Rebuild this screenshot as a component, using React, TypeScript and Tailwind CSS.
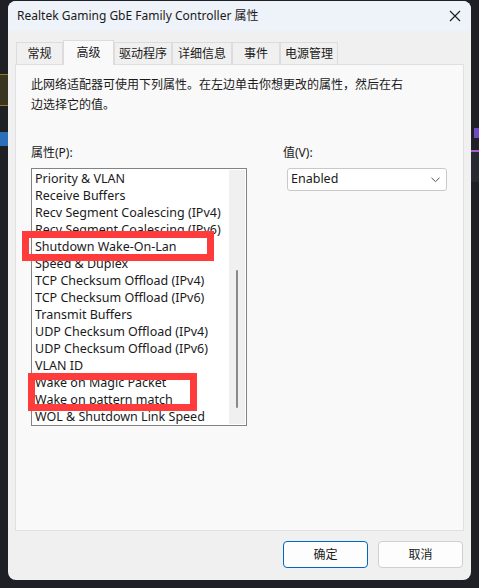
import React from "react";

const items = [
  "Priority & VLAN",
  "Receive Buffers",
  "Recv Segment Coalescing (IPv4)",
  "Recv Segment Coalescing (IPv6)",
  "Shutdown Wake-On-Lan",
  "Speed & Duplex",
  "TCP Checksum Offload (IPv4)",
  "TCP Checksum Offload (IPv6)",
  "Transmit Buffers",
  "UDP Checksum Offload (IPv4)",
  "UDP Checksum Offload (IPv6)",
  "VLAN ID",
  "Wake on Magic Packet",
  "Wake on pattern match",
  "WOL & Shutdown Link Speed",
];

const tabs = ["常规", "高级", "驱动程序", "详细信息", "事件", "电源管理"];
const tabWidths = ["w-[47px]", "w-[51px]", "w-[58px]", "w-[60px]", "w-[48px]", "w-[58px]"];

const font = { fontFamily: '"Noto Sans", "Noto Sans CJK SC", sans-serif' };

export default function App() {
  return (
    <div className="relative w-[479px] h-[588px] overflow-hidden bg-[#1e2025]" style={font}>
      {/* desktop behind the dialog */}
      <div className="absolute left-0 top-[74px] w-[8px] h-[32px] border-y border-[#8a7a2a] bg-[#3a3520]" />
      <div className="absolute left-0 top-[132px] w-[8px] h-[14px] bg-[#2a6fb8]" />
      <div className="absolute right-0 top-[152px] w-[8px] h-[30px] bg-[#272a31]" />
      <div className="absolute right-0 top-[150px] w-[8px] h-[2px] bg-[#b05bd6]" />
      <div className="absolute right-0 top-[128px] w-[5px] h-[10px] bg-[#6e4cc4]" />

      {/* dialog */}
      <div className="relative ml-[8px] mt-[1px] w-[463px] h-[579px] rounded-[8px] overflow-hidden bg-[#f0f0f0] flex flex-col">
        <div className="h-[30px] bg-[#eef2f9] flex items-center justify-between pl-[9px] pr-[9px]">
          <span className="text-[12px] text-[#1a1a1a]">Realtek Gaming GbE Family Controller 属性</span>
          <svg width="12" height="12" viewBox="0 0 12 12" className="mr-[1px]">
            <path d="M1 1 L11 11 M11 1 L1 11" stroke="#1a1a1a" strokeWidth="1.1" />
          </svg>
        </div>

        <div className="flex-1 flex flex-col px-[7px] pt-[8px]">
          <div className="flex items-end pl-[1px] h-[25px] relative z-10">
            {tabs.map((t, i) =>
              i === 1 ? (
                <div
                  key={t}
                  className={`${tabWidths[i]} h-[25px] -mb-[1px] bg-[#f9f9f9] border border-b-0 border-[#dcdcdc] flex items-start pt-[3px] justify-center text-[12px] text-[#1a1a1a]`}
                >
                  {t}
                </div>
              ) : (
                <div
                  key={t}
                  className={`${tabWidths[i]} h-[22px] bg-[#f0f0f0] border border-b-0 border-[#dcdcdc] flex items-center justify-center text-[12px] text-[#1a1a1a]`}
                >
                  {t}
                </div>
              )
            )}
          </div>

          <div className="h-[467px] bg-[#f9f9f9] border border-[#e0e0e0] px-[15px] pt-[10px]">
            <p className="text-[12px] leading-[20px] text-[#1a1a1a] w-[375px]">
              此网络适配器可使用下列属性。在左边单击你想更改的属性，然后在右边选择它的值。
            </p>

            <div className="flex mt-[30px]">
              <div className="w-[216px]">
                <div className="text-[12px] leading-[16px] text-[#1a1a1a] h-[23px]">属性(P):</div>
                <div className="h-[258px] border border-[#838383] bg-white flex">
                  <div className="flex-1 pl-[3px] pt-[1px] overflow-hidden">
                    {items.map((it) => (
                      <div key={it} className="h-[17px] leading-[17px] text-[12.5px] text-[#1a1a1a] whitespace-nowrap">
                        {it}
                      </div>
                    ))}
                  </div>
                  <div className="w-[16px] my-[1px] mr-[1px] bg-[#f0f0f0] flex justify-center pt-[100px]">
                    <div className="w-[2px] h-[138px] bg-[#8a8a8a] rounded-full" />
                  </div>
                </div>
              </div>

              <div className="ml-[40px] w-[160px]">
                <div className="text-[12px] leading-[16px] text-[#1a1a1a] h-[23px] -ml-[4px]">值(V):</div>
                <div className="h-[23px] border border-[#c9c9c9] rounded-[3px] bg-white flex items-center justify-between pl-[3px] pr-[6px]">
                  <span className="text-[12.5px] text-[#1a1a1a]">Enabled</span>
                  <svg width="9" height="6" viewBox="0 0 9 6">
                    <path d="M0.5 0.8 L4.5 4.6 L8.5 0.8" fill="none" stroke="#555" strokeWidth="1" />
                  </svg>
                </div>
              </div>
            </div>
          </div>

          <div className="flex justify-end gap-[10px] pt-[10px] pr-[1px]">
            <button className="w-[85px] h-[27px] rounded-[4px] border border-[#0067c0] bg-[#fdfdfd] text-[12px] text-[#1a1a1a]">
              确定
            </button>
            <button className="w-[85px] h-[27px] rounded-[4px] border border-[#d0d0d0] bg-[#fdfdfd] text-[12px] text-[#1a1a1a]">
              取消
            </button>
          </div>
        </div>
      </div>

      {/* red annotation boxes */}
      <div className="absolute left-[22px] top-[231px] w-[192px] h-[30px] border-[7px] border-[#ff3b3b]" />
      <div className="absolute left-[28px] top-[373px] w-[169px] h-[38px] border-[7px] border-[#ff3b3b]" />
    </div>
  );
}
